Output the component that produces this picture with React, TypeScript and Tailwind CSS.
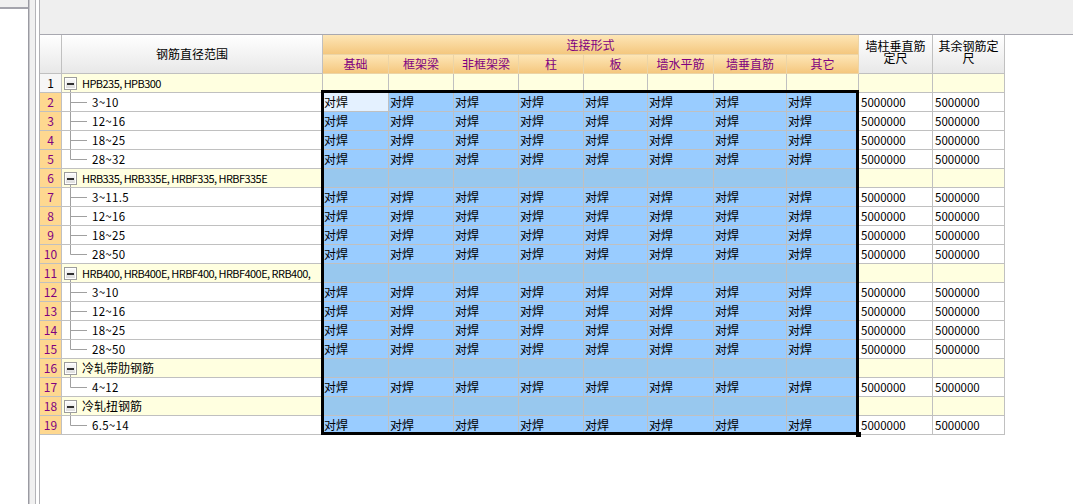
import React from 'react'

type Row = { group?: boolean; label: string; last?: boolean; latin?: boolean }

const rows: Row[] = [
  { group: true, label: 'HPB235, HPB300', latin: true },
  { label: '3~10' },
  { label: '12~16' },
  { label: '18~25' },
  { label: '28~32', last: true },
  { group: true, label: 'HRB335, HRB335E, HRBF335, HRBF335E', latin: true },
  { label: '3~11.5' },
  { label: '12~16' },
  { label: '18~25' },
  { label: '28~50', last: true },
  { group: true, label: 'HRB400, HRB400E, HRBF400, HRBF400E, RRB400,', latin: true },
  { label: '3~10' },
  { label: '12~16' },
  { label: '18~25' },
  { label: '28~50', last: true },
  { group: true, label: '冷轧带肋钢筋' },
  { label: '4~12', last: true },
  { group: true, label: '冷轧扭钢筋' },
  { label: '6.5~14', last: true },
]

const linkCols = [
  { label: '基础', w: 'w-[66px]' },
  { label: '框架梁', w: 'w-[65px]' },
  { label: '非框架梁', w: 'w-[65px]' },
  { label: '柱', w: 'w-[65px]' },
  { label: '板', w: 'w-[64px]' },
  { label: '墙水平筋', w: 'w-[66px]' },
  { label: '墙垂直筋', w: 'w-[73px]' },
  { label: '其它', w: 'w-[72px]' },
]

function TreeBox() {
  return (
    <svg width="16" height="18" className="shrink-0 ml-[2px]">
      <line x1="6.5" y1="15" x2="6.5" y2="18" stroke="#a0a0a0" />
      <defs>
        <linearGradient id="tb" x1="0" y1="0" x2="0" y2="1">
          <stop offset="0" stopColor="#ffffff" />
          <stop offset="1" stopColor="#d8d8d8" />
        </linearGradient>
      </defs>
      <rect x="0.5" y="3.5" width="12" height="12" fill="url(#tb)" stroke="#9c9c9c" />
      <rect x="1.5" y="4.5" width="10" height="10" fill="none" stroke="#ffffff" />
      <rect x="3" y="9" width="7" height="2" fill="#303030" />
    </svg>
  )
}

function TreeLine({ last }: { last?: boolean }) {
  return (
    <svg width="30" height="18" className="shrink-0">
      <line x1="8.5" y1="0" x2="8.5" y2={last ? 9.5 : 18} stroke="#a0a0a0" />
      <line x1="8.5" y1="9.5" x2="25" y2="9.5" stroke="#a0a0a0" />
    </svg>
  )
}

export default function App() {
  return (
    <div className="w-[1073px] h-[504px] flex bg-white overflow-hidden font-['Noto_Sans_CJK_SC','Liberation_Sans',sans-serif] text-black">
      {/* 左侧面板 */}
      <div className="w-[28px] shrink-0 flex flex-col">
        <div className="h-[9px] bg-[#f0f0f0] border-b-2 border-[#a4a4ac]" />
        <div className="flex-1 bg-white" />
      </div>
      <div className="w-[2px] shrink-0 border-l border-[#9a9aa2] bg-[#c8c8cc]" />
      <div className="w-[5px] shrink-0 bg-[#f0f0f0]" />
      <div className="w-[4px] shrink-0 border-l border-[#b4b4b8] bg-white" />

      {/* 主区域 */}
      <div className="flex-1 flex flex-col border-l border-[#b0b0b4]">
        <div className="h-[35px] shrink-0 bg-[#efefef] border-b border-[#a8a8b0]" />

        <div className="relative">
          {/* 表头 */}
          <div className="flex h-[39px] text-[12px]">
            <div className="w-[22px] shrink-0 border-r border-b border-[#c0c0c0] bg-linear-to-b from-white to-[#e8e8e8]" />
            <div className="w-[261px] shrink-0 border-r border-b border-[#c0c0c0] bg-linear-to-b from-white to-[#e8e8e8] flex items-center justify-center">
              钢筋直径范围
            </div>
            <div className="w-[536px] shrink-0 flex flex-col text-[#800080]">
              <div className="h-[20px] border-b border-r border-[#ecd4a6] bg-linear-to-b from-[#fde6b6] to-[#f4c77e] flex items-center justify-center leading-[18px]">
                连接形式
              </div>
              <div className="flex flex-1">
                {linkCols.map((c) => (
                  <div
                    key={c.label}
                    className={`${c.w} shrink-0 border-r border-b border-[#ecd4a6] bg-linear-to-b from-[#fde6b6] to-[#f4c77e] flex items-center justify-center leading-[18px]`}
                  >
                    {c.label}
                  </div>
                ))}
              </div>
            </div>
            <div className="w-[74px] shrink-0 border-r border-b border-[#c0c0c0] bg-linear-to-b from-white to-[#e8e8e8] flex items-start justify-center text-center leading-[12px] pt-[5px] px-[3px]">
              墙柱垂直筋定尺
            </div>
            <div className="w-[72px] shrink-0 border-r border-b border-[#c0c0c0] bg-linear-to-b from-white to-[#e8e8e8] flex items-start justify-center text-center leading-[12px] pt-[5px] px-[3px]">
              其余钢筋定尺
            </div>
          </div>

          {/* 数据行 */}
          {rows.map((r, i) => {
            const n = i + 1
            const selected = n >= 2
            return (
              <div key={n} className="flex h-[19px] text-[12px] leading-[18px]">
                <div
                  className={`w-[22px] shrink-0 border-r border-b border-[#c0c0c0] flex items-center justify-center ${
                    selected ? 'bg-[#fed890] text-[#800080]' : 'bg-[#f6f6f6] text-black'
                  }`}
                >
                  {n}
                </div>
                <div
                  className={`w-[261px] shrink-0 border-r border-b border-[#c0c0c0] flex items-center overflow-hidden whitespace-nowrap ${
                    r.group ? 'bg-[#ffffe0]' : 'bg-white'
                  }`}
                >
                  {r.group ? (
                    <>
                      <TreeBox />
                      <span className={`ml-[2px] ${r.latin ? 'text-[11px] tracking-[-0.55px]' : ''}`}>{r.label}</span>
                    </>
                  ) : (
                    <>
                      <TreeLine last={r.last} />
                      <span className="text-[11.5px] tracking-[0.3px]">{r.label}</span>
                    </>
                  )}
                </div>
                {linkCols.map((c, ci) => (
                  <div
                    key={c.label}
                    className={`${c.w} shrink-0 border-r border-b border-[#c0c0c0] pl-[1px] flex items-center ${
                      !selected
                        ? 'bg-[#ffffe0]'
                        : r.group
                          ? 'bg-[#98c8ee]'
                          : n === 2 && ci === 0
                            ? 'bg-[#e4f1ff]'
                            : 'bg-[#99ccff]'
                    }`}
                  >
                    {!r.group && '对焊'}
                  </div>
                ))}
                <div
                  className={`w-[74px] shrink-0 border-r border-b border-[#c0c0c0] pl-[2px] flex items-center text-[11.5px] ${
                    r.group ? 'bg-[#ffffe0]' : 'bg-white'
                  }`}
                >
                  {!r.group && '5000000'}
                </div>
                <div
                  className={`w-[72px] shrink-0 border-r border-b border-[#c0c0c0] pl-[2px] flex items-center text-[11.5px] ${
                    r.group ? 'bg-[#ffffe0]' : 'bg-white'
                  }`}
                >
                  {!r.group && '5000000'}
                </div>
              </div>
            )
          })}

          {/* 选择框 */}
          <div className="absolute left-[281px] top-[55px] w-[538px] h-[345px] border-[3px] border-black pointer-events-none">
            <div className="absolute right-[-5px] bottom-[-5px] w-[5px] h-[5px] bg-black" />
          </div>
        </div>
      </div>
    </div>
  )
}
